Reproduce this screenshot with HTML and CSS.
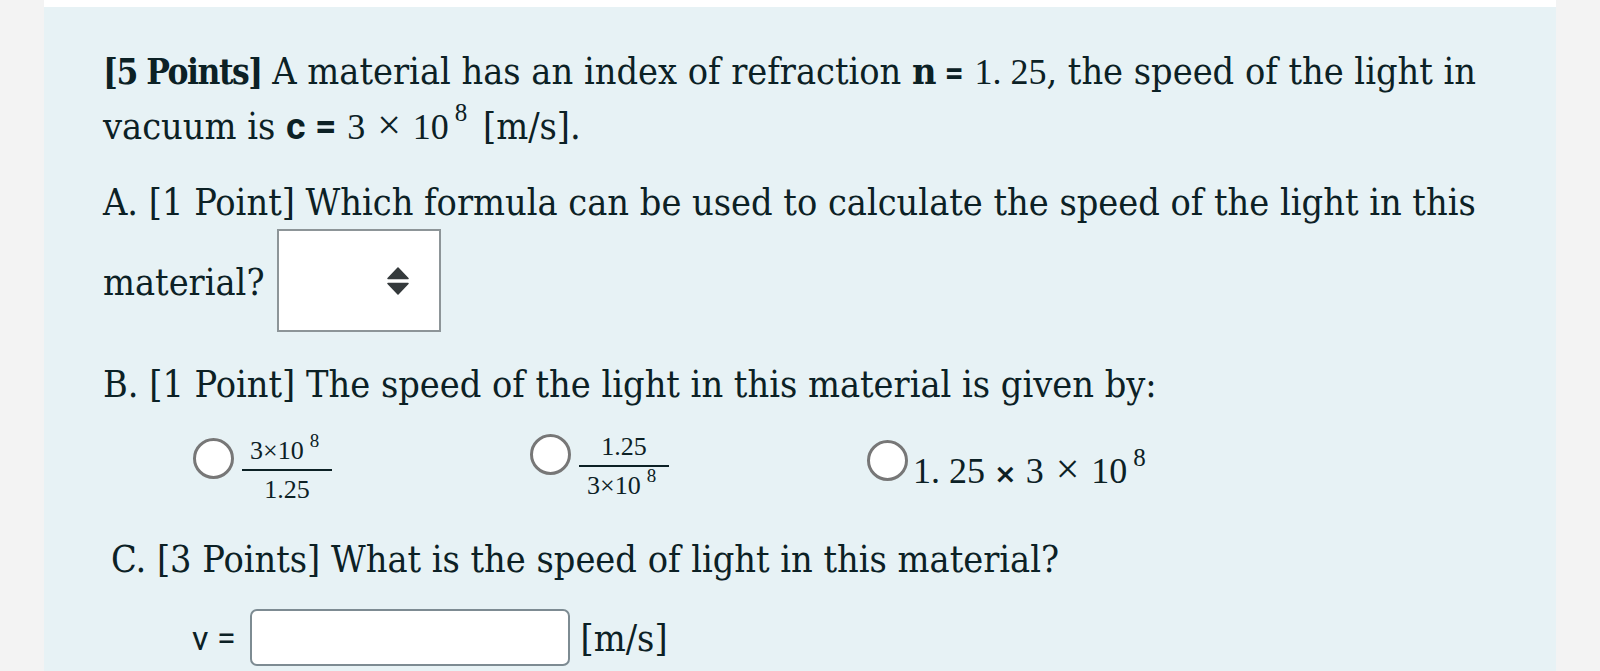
FILE: index.html
```html
<!DOCTYPE html>
<html lang="en">
  <head>
    <meta charset="UTF-8" />
    <meta name="viewport" content="width=device-width, initial-scale=1" />
    <title>Index of Refraction</title>
    <link rel="stylesheet" href="styles.css">
  </head>
  <body>
    <div class="sheet">
      <div class="panel">
        <p class="lead"><b class="label">[5 Points]</b> A material has an index of refraction <b>n<span class="eq"> =</span></b> <span class="math">1. 25</span>, the speed of the light in vacuum is <b class="sans">c =</b> <span class="math">3 <span class="op">×</span> 10<sup>8</sup></span> [m/s].</p>

        <p class="part part-a">A. [1 Point] Which formula can be used to calculate the speed of the light in this material? <span class="select"><svg class="select-arrows" width="22" height="28" viewBox="0 0 22 28"><path d="M11 1 L21 11.5 H1 Z" /><path d="M1 16.5 H21 L11 27 Z" /></svg></span></p>

        <p class="part part-b">B. [1 Point] The speed of the light in this material is given by:</p>

        <div class="options">
          <label class="option">
            <span class="radio"></span>
            <span class="frac">
              <span class="num">3×10<sup>8</sup></span>
              <span class="den">1.25</span>
            </span>
          </label>
          <label class="option option-raised">
            <span class="radio"></span>
            <span class="frac">
              <span class="num">1.25</span>
              <span class="den">3×10<sup>8</sup></span>
            </span>
          </label>
          <label class="option option-inline">
            <span class="radio"></span>
            <span class="math option-text">1. 25 <span class="times">×</span> 3 <span class="op">×</span> 10<sup>8</sup></span>
          </label>
        </div>

        <p class="part part-c">C. [3 Points] What is the speed of light in this material?</p>

        <div class="answer">
          <span class="var">v =</span>
          <input class="answer-input" type="text">
          <span class="unit">[m/s]</span>
        </div>
      </div>
    </div>
  </body>
</html>
```

FILE: styles.css
```css
html {
  font-size: 100%;
}

body {
  margin: 0;
  background: #f3f3f3;
  color: #0c2125;
  font-family: "DejaVu Serif", serif;
  font-stretch: condensed;
}

* {
  box-sizing: border-box;
}

.sheet {
  width: 1512px;
  margin: 0 auto;
  padding-top: 7px;
  background: #fff;
}

.panel {
  min-height: 664px;
  padding: 37px 50px 0 59px;
  background: #e7f2f5;
  font-size: 37.5px;
  line-height: 54px;
}

p {
  margin: 0;
}

b {
  font-weight: bold;
}

.label {
  font-size: 35px;
  letter-spacing: -1.5px;
}

.sans,
.eq {
  font-family: Roboto, "Liberation Sans", sans-serif;
  font-stretch: normal;
  line-height: 1;
}

.eq {
  font-size: 33px;
}

.math {
  font-family: "Liberation Serif", serif;
  font-size: 36px;
  line-height: 1;
}

.op {
  margin: 0 3px;
  font-family: "Liberation Serif", serif;
  font-size: 42px;
  font-weight: normal;
  line-height: 0;
}

sup {
  font-size: 25px;
  line-height: 0;
  vertical-align: 18px;
  margin: 0 5px 0 6px;
}

.part-a {
  margin-top: 22px;
}

.part-b {
  margin-top: 25px;
}

.select {
  display: inline-block;
  width: 164px;
  height: 103px;
  margin-left: 2px;
  vertical-align: -37px;
  background: #fff;
  border: 2px solid #8d9598;
}

.select-arrows {
  display: block;
  margin: 36px 0 0 108px;
  fill: #353a3c;
  stroke: #353a3c;
  stroke-width: 1.5;
  stroke-linejoin: round;
}

.options {
  display: grid;
  grid-template-columns: 337px 337px 337px;
  align-items: start;
  margin: 25px 0 0 90px;
}

.option {
  display: flex;
  align-items: center;
  gap: 8px;
}

.option-raised {
  margin-top: -4px;
}

.radio {
  width: 41px;
  height: 41px;
  margin-bottom: 24px;
  flex: none;
  border: 3px solid #777;
  border-radius: 50%;
  background: #fff;
}

.option-inline {
  align-items: flex-start;
  gap: 5px;
}

.option-inline .radio {
  margin: 4px 0 0;
}

.frac {
  display: inline-flex;
  flex-direction: column;
  font-family: "Liberation Serif", serif;
  font-size: 26px;
  line-height: 30px;
  text-align: center;
}

.frac sup {
  font-size: 19px;
  vertical-align: 12px;
  margin: 0 5px 0 6px;
}

.num {
  padding: 0 8px 3px;
  border-bottom: 2px solid #0c2125;
}

.den {
  padding: 4px 8px 0;
}

.option-text {
  margin-top: 17px;
  white-space: nowrap;
}

.option-text sup {
  vertical-align: 17px;
}

.times {
  font-family: "DejaVu Sans", sans-serif;
  font-size: 27px;
  font-weight: bold;
  font-stretch: normal;
}

.part-c {
  margin-top: 27px;
  padding-left: 8px;
}

.answer {
  display: flex;
  align-items: center;
  margin: 23px 0 0 89px;
}

.var {
  font-family: Roboto, "Liberation Sans", sans-serif;
  font-stretch: normal;
  font-size: 34px;
  margin-right: 14px;
}

.answer-input {
  width: 320px;
  height: 57px;
  margin: 0;
  border: 2px solid #7d8b92;
  border-radius: 7px;
  background: #fff;
}

.unit {
  margin-left: 11px;
}
```
